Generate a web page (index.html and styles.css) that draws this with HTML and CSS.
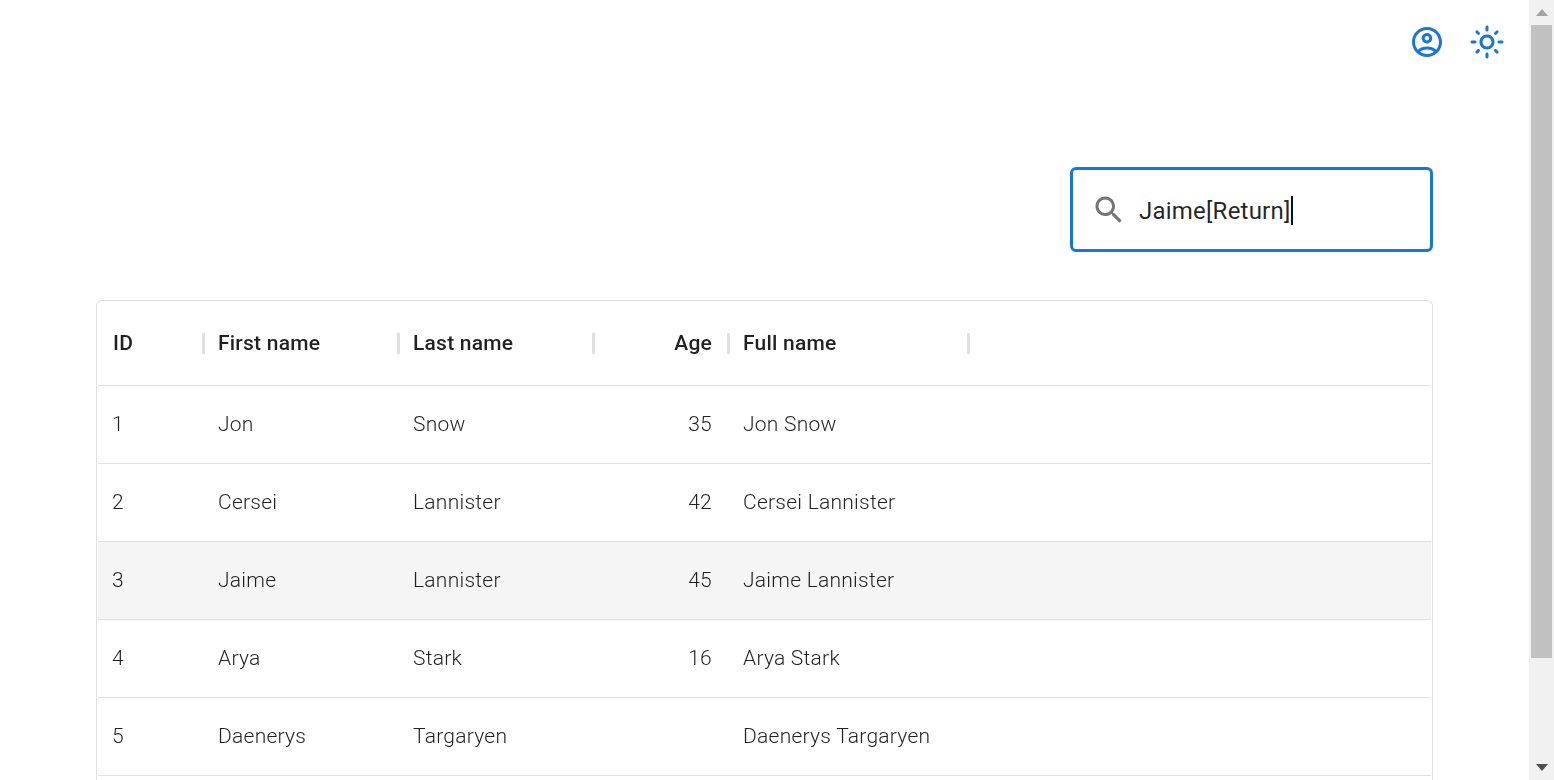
FILE: index.html
```html
<!DOCTYPE html>
<html lang="en">

<head>
    <meta charset="UTF-8">
    <meta name="viewport" content="width=device-width, initial-scale=1.0">
    <title>Users</title>
    <link rel="stylesheet" href="styles.css">
</head>

<body>
    <main class="pagina">
        <header class="barra">
            <button class="icono-boton" aria-label="Account">
                <svg viewBox="0 0 24 24"><path d="M12 2C6.48 2 2 6.48 2 12s4.48 10 10 10 10-4.48 10-10S17.52 2 12 2zM7.35 18.5C8.66 17.56 10.26 17 12 17s3.34.56 4.65 1.5c-1.31.94-2.91 1.5-4.65 1.5s-3.34-.56-4.65-1.5zm10.79-1.38C16.45 15.8 14.32 15 12 15s-4.45.8-6.14 2.12C4.7 15.73 4 13.95 4 12c0-4.42 3.58-8 8-8s8 3.58 8 8c0 1.95-.7 3.73-1.86 5.12zM12 6c-1.93 0-3.5 1.57-3.5 3.5S10.07 13 12 13s3.5-1.57 3.5-3.5S13.93 6 12 6zm0 5c-.83 0-1.5-.67-1.5-1.5S11.17 8 12 8s1.5.67 1.5 1.5S12.83 11 12 11z"/></svg>
            </button>
            <button class="icono-boton" aria-label="Theme">
                <svg viewBox="0 0 24 24"><path d="M12 9c1.65 0 3 1.35 3 3s-1.35 3-3 3-3-1.35-3-3 1.35-3 3-3m0-2c-2.76 0-5 2.24-5 5s2.24 5 5 5 5-2.24 5-5-2.24-5-5-5zM2 13h2c.55 0 1-.45 1-1s-.45-1-1-1H2c-.55 0-1 .45-1 1s.45 1 1 1zm18 0h2c.55 0 1-.45 1-1s-.45-1-1-1h-2c-.55 0-1 .45-1 1s.45 1 1 1zM11 2v2c0 .55.45 1 1 1s1-.45 1-1V2c0-.55-.45-1-1-1s-1 .45-1 1zm0 18v2c0 .55.45 1 1 1s1-.45 1-1v-2c0-.55-.45-1-1-1s-1 .45-1 1zM5.99 4.58c-.39-.39-1.03-.39-1.41 0-.39.39-.39 1.03 0 1.41l1.06 1.06c.39.39 1.03.39 1.41 0s.39-1.03 0-1.41L5.99 4.58zm12.37 12.37c-.39-.39-1.03-.39-1.41 0-.39.39-.39 1.03 0 1.41l1.06 1.06c.39.39 1.03.39 1.41 0 .39-.39.39-1.03 0-1.41l-1.06-1.06zm1.06-10.96c.39-.39.39-1.03 0-1.41-.39-.39-1.03-.39-1.41 0l-1.06 1.06c-.39.39-.39 1.03 0 1.41s1.03.39 1.41 0l1.06-1.06zM7.05 18.36c.39-.39.39-1.03 0-1.41-.39-.39-1.03-.39-1.41 0l-1.06 1.06c-.39.39-.39 1.03 0 1.41s1.03.39 1.41 0l1.06-1.06z"/></svg>
            </button>
        </header>

        <div class="busqueda-fila">
            <div class="busqueda">
                <svg class="lupa" viewBox="0 0 24 24"><path d="M15.5 14h-.79l-.28-.27C15.41 12.59 16 11.11 16 9.5 16 5.91 13.09 3 9.5 3S3 5.91 3 9.5 5.91 16 9.5 16c1.61 0 3.09-.59 4.23-1.57l.27.28v.79l5 4.99L20.49 19l-4.99-5zm-6 0C7.01 14 5 11.99 5 9.5S7.01 5 9.5 5 14 7.01 14 9.5 11.99 14 9.5 14z"/></svg>
                <span class="busqueda-texto">Jaime[Return]</span><span class="cursor"></span>
            </div>
        </div>

        <section class="tabla">
            <div class="fila cabecera">
                <div class="celda">ID<span class="separador"></span></div>
                <div class="celda">First name<span class="separador"></span></div>
                <div class="celda">Last name<span class="separador"></span></div>
                <div class="celda derecha">Age<span class="separador"></span></div>
                <div class="celda">Full name<span class="separador"></span></div>
            </div>
            <div class="fila">
                <div class="celda id">1</div>
                <div class="celda">Jon</div>
                <div class="celda">Snow</div>
                <div class="celda derecha">35</div>
                <div class="celda">Jon Snow</div>
            </div>
            <div class="fila">
                <div class="celda id">2</div>
                <div class="celda">Cersei</div>
                <div class="celda">Lannister</div>
                <div class="celda derecha">42</div>
                <div class="celda">Cersei Lannister</div>
            </div>
            <div class="fila activa">
                <div class="celda id">3</div>
                <div class="celda">Jaime</div>
                <div class="celda">Lannister</div>
                <div class="celda derecha">45</div>
                <div class="celda">Jaime Lannister</div>
            </div>
            <div class="fila">
                <div class="celda id">4</div>
                <div class="celda">Arya</div>
                <div class="celda">Stark</div>
                <div class="celda derecha">16</div>
                <div class="celda">Arya Stark</div>
            </div>
            <div class="fila">
                <div class="celda id">5</div>
                <div class="celda">Daenerys</div>
                <div class="celda">Targaryen</div>
                <div class="celda derecha"></div>
                <div class="celda">Daenerys Targaryen</div>
            </div>
            <div class="fila"></div>
        </section>
    </main>

    <aside class="scroll">
        <span class="flecha arriba"></span>
        <div class="scroll-pista"><div class="scroll-barra"></div></div>
        <span class="flecha abajo"></span>
    </aside>
</body>

</html>
```

FILE: styles.css
```css
* {
    box-sizing: border-box;
    margin: 0;
    padding: 0;
    font-family: Roboto, "Liberation Sans", sans-serif;
}

html,
body {
    height: 100%;
    overflow: hidden;
}

body {
    display: flex;
    background-color: #fff;
    color: rgba(0, 0, 0, 0.87);
}

.pagina {
    flex: 1;
    min-width: 0;
    padding: 0 96px;
    overflow: hidden;
}

.barra {
    display: flex;
    justify-content: flex-end;
    gap: 24px;
    height: 84px;
    margin-right: -72px;
    padding-top: 24px;
}

.icono-boton {
    width: 36px;
    height: 36px;
    border: none;
    background: none;
    cursor: pointer;
}

.icono-boton svg {
    display: block;
    width: 36px;
    height: 36px;
    fill: #1976d2;
}

.busqueda-fila {
    display: flex;
    justify-content: flex-end;
    margin-top: 83px;
}

.busqueda {
    display: flex;
    align-items: center;
    width: 363px;
    height: 85px;
    padding-left: 18px;
    border: 3px solid #1976d2;
    border-radius: 6px;
}

.lupa {
    flex: none;
    width: 36px;
    height: 36px;
    margin-right: 12px;
    fill: #757575;
}

.busqueda-texto {
    padding-top: 2px;
    font-size: 24px;
    line-height: 30px;
    letter-spacing: 0.225px;
}

.cursor {
    width: 2px;
    height: 29px;
    margin-top: 1px;
    background-color: #111;
}

.tabla {
    margin-top: 48px;
    padding: 0 1px;
    border: 1px solid #e0e0e0;
    border-bottom: none;
    border-radius: 6px 6px 0 0;
    will-change: transform;
}

.fila {
    display: grid;
    grid-template-columns: 105px 195px 195px 135px 240px;
    height: 78px;
    padding-bottom: 2px;
    border-bottom: 1px solid #e0e0e0;
    font-size: 21px;
    line-height: 24px;
    letter-spacing: 0.25px;
    font-weight: 360;
}

.cabecera {
    height: 85px;
    padding-bottom: 0;
    font-weight: 465;
    letter-spacing: 0.225px;
}

.activa {
    background-color: #f5f5f5;
}

.celda {
    position: relative;
    display: flex;
    align-items: center;
    padding: 0 16px 0 15px;
    white-space: nowrap;
}

.id {
    padding-left: 14px;
}

.derecha {
    justify-content: flex-end;
}

.separador {
    position: absolute;
    top: 32px;
    right: -2px;
    width: 3px;
    height: 21px;
    background-color: #e0e0e0;
}

.scroll {
    flex: none;
    display: flex;
    flex-direction: column;
    align-items: center;
    width: 25px;
    background-color: #f1f1f1;
}

.flecha {
    flex: none;
    width: 0;
    height: 0;
    margin: 9px 0;
    border-left: 6px solid transparent;
    border-right: 6px solid transparent;
}

.arriba {
    border-bottom: 7px solid #a3a3a3;
}

.abajo {
    border-top: 7px solid #505050;
}

.scroll-pista {
    flex: 1;
    width: 100%;
    padding: 0 2px;
}

.scroll-barra {
    height: 633px;
    background-color: #c1c1c1;
}
```
